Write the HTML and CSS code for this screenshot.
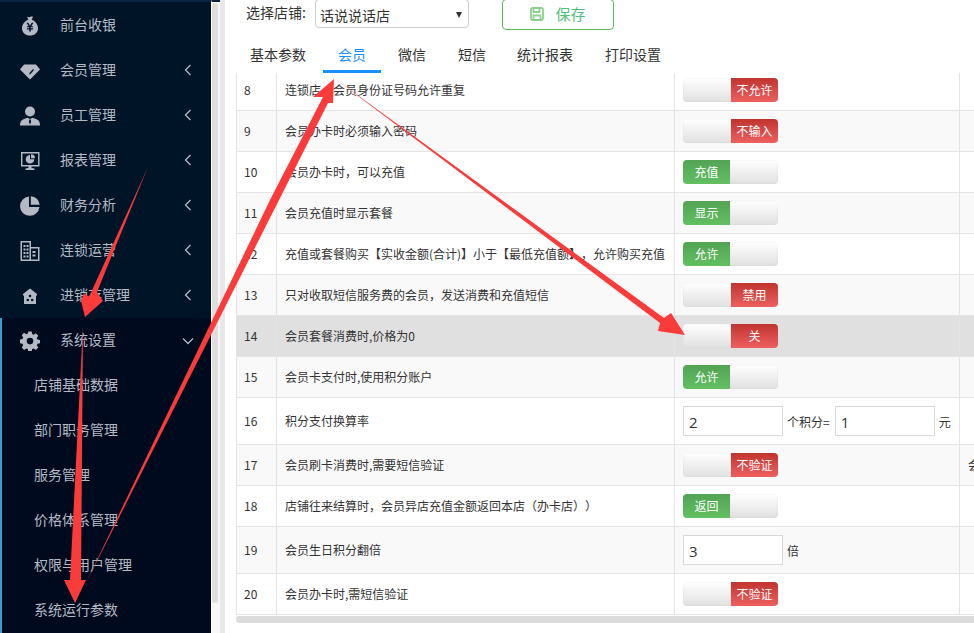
FILE: index.html
```html
<!DOCTYPE html>
<html lang="zh">
<head>
<meta charset="utf-8">
<title>系统运行参数</title>
<link rel="stylesheet" href="styles.css">
</head>
<body>
<div class="app">
  <aside class="sidebar">
    <nav class="nav">
      <a class="nav-item"><svg class="ico" viewBox="0 0 20 20"><path d="M7 .5c1 .8 2 .8 3 .4s2-.4 3-.2l-1.300 3c3.500 1.300 6.300 4.500 6.300 8.500 0 4.600-3.500 7.300-8 7.300s-8-2.700-8-7.300c0-4 2.800-7.200 6.300-8.500z"/><path class="cut" d="M6.500 6.800h1.700l1.800 2.800 1.800-2.800h1.700l-2.200 3.400h1.800v1.100h-2.300v1h2.300v1.100h-2.300v2.100H9.200v-2.100H6.900v-1.100h2.300v-1H6.900v-1.100h1.800z"/></svg><span class="lbl">前台收银</span></a>
      <a class="nav-item"><svg class="ico" viewBox="0 0 20 20"><path d="M4 3.500h12l4 5-10 10-10-10z"/><path class="cut" d="M9.500 12l3.500-4 1 .9-3.500 4-1.500.6z"/></svg><span class="lbl">会员管理</span><svg class="chev" viewBox="0 0 8 12"><path d="M6.500 1 1.500 6l5 5"/></svg></a>
      <a class="nav-item"><svg class="ico" viewBox="0 0 20 20"><circle cx="10" cy="5.500" r="5"/><path d="M0 19.500c0-3.500 1-5.500 4-6.500l3.500-1.200L10 13l2.500-1.200L16 13c3 1 4 3 4 6.500z"/><path class="cut" d="M9.300 13.500h1.400l.4 2.500-1.100 2.500-1.100-2.500z"/></svg><span class="lbl">员工管理</span><svg class="chev" viewBox="0 0 8 12"><path d="M6.500 1 1.500 6l5 5"/></svg></a>
      <a class="nav-item"><svg class="ico" viewBox="0 0 20 20"><path fill-rule="evenodd" d="M1 1h18.500v14.500H11.500V17l3 .6V19h-9v-1.400l3-.6v-1.500H1zm1.400 1.400v11.700h15.700V2.400z"/><path d="M10 4a4.300 4.300 0 1 0 4.300 4.300H10zM11 3.300V7.300h4a4 4 0 0 0-4-4z"/></svg><span class="lbl">报表管理</span><svg class="chev" viewBox="0 0 8 12"><path d="M6.500 1 1.500 6l5 5"/></svg></a>
      <a class="nav-item"><svg class="ico" viewBox="0 0 20 20"><path d="M9 .5v10.400h10.400A9.700 9.700 0 1 1 9 .5z"/><path d="M10.800.2v8.500h8.900A9.500 9.500 0 0 0 10.800.2z"/></svg><span class="lbl">财务分析</span><svg class="chev" viewBox="0 0 8 12"><path d="M6.500 1 1.500 6l5 5"/></svg></a>
      <a class="nav-item"><svg class="ico" viewBox="0 0 20 20"><path fill-rule="evenodd" d="M.5 0h10.500v6h8.500v14H.5zM2 1.500V18.500h7.500V1.500zm9 6V18.500h7V7.500z"/><path d="M3.500 4h2v2h-2zm3 0h2v2h-2zm-3 3.500h2v2h-2zm3 0h2v2h-2zm-3 3.500h2v2h-2zm3 0h2v2h-2zm-3 3.500h2v2h-2zm3 0h2v2h-2zm6-4.500h3v2h-3zm0 3.500h3v2h-3z"/></svg><span class="lbl">连锁运营</span><svg class="chev" viewBox="0 0 8 12"><path d="M6.500 1 1.500 6l5 5"/></svg></a>
      <a class="nav-item"><svg class="ico" viewBox="0 0 20 20"><path d="M10 2.500 17 8v1.500h-1v8.500H4V9.500H3V8z"/><circle class="cut" cx="10" cy="10" r="1.300"/><circle class="cut" cx="7.800" cy="14" r="1.300"/><circle class="cut" cx="12.200" cy="14" r="1.300"/></svg><span class="lbl">进销存管理</span><svg class="chev" viewBox="0 0 8 12"><path d="M6.500 1 1.500 6l5 5"/></svg></a>
    </nav>
    <nav class="nav-open">
      <a class="nav-item"><svg class="ico" viewBox="0 0 20 20"><path fill-rule="evenodd" d="M8.300.5h3.400l.5 2.600 1.500.7 2.200-1.500 2.400 2.400-1.500 2.200.7 1.500 2.500.5v3.400l-2.500.5-.7 1.500 1.500 2.200-2.400 2.400-2.200-1.500-1.500.7-.5 2.600H8.300l-.5-2.600-1.500-.7-2.200 1.500-2.400-2.400 1.500-2.200-.7-1.500-2.500-.5V8.400l2.500-.5.700-1.500-1.500-2.200 2.400-2.400 2.200 1.500 1.500-.7zM10 6.800a3.300 3.300 0 1 0 0 6.600 3.300 3.300 0 0 0 0-6.600z"/></svg><span class="lbl">系统设置</span><svg class="chev-down" viewBox="0 0 12 8"><path d="M1 1.500l5 5 5-5"/></svg></a>
      <a class="nav-sub">店铺基础数据</a>
      <a class="nav-sub">部门职务管理</a>
      <a class="nav-sub">服务管理</a>
      <a class="nav-sub">价格体系管理</a>
      <a class="nav-sub">权限与用户管理</a>
      <a class="nav-sub">系统运行参数</a>
    </nav>
  </aside>
  <div class="side-scroll"><div class="side-thumb"></div></div>
  <main class="main">
    <div class="toolbar">
      <label class="store-label">选择店铺:</label>
      <div class="select">话说说话店<span class="caret"></span></div>
      <button class="save"><svg class="save-ico" viewBox="0 0 14 14"><rect x="1" y="1" width="12" height="12" rx="1.500"/><path d="M3.500 1v4h6V1M3.500 13V8.500h7V13"/></svg><span>保存</span></button>
    </div>
    <div class="tabs">
      <a class="tab">基本参数</a><a class="tab active">会员</a><a class="tab">微信</a><a class="tab">短信</a><a class="tab">统计报表</a><a class="tab">打印设置</a>
    </div>
    <div class="table-wrap">
      <table class="grid">
        <colgroup><col class="c1"><col class="c2"><col class="c3"><col class="c4"></colgroup>
        <tbody>
          <tr><td>8</td><td>连锁店，会员身份证号码允许重复</td><td><span class="sw off"><i></i><b>不允许</b></span></td><td></td></tr>
          <tr><td>9</td><td>会员办卡时必须输入密码</td><td><span class="sw off"><i></i><b>不输入</b></span></td><td></td></tr>
          <tr><td>10</td><td>会员办卡时，可以充值</td><td><span class="sw on"><b>充值</b><i></i></span></td><td></td></tr>
          <tr><td>11</td><td>会员充值时显示套餐</td><td><span class="sw on"><b>显示</b><i></i></span></td><td></td></tr>
          <tr><td>12</td><td>充值或套餐购买【实收金额(合计)】小于【最低充值额】，允许购买充值</td><td><span class="sw on"><b>允许</b><i></i></span></td><td></td></tr>
          <tr><td>13</td><td>只对收取短信服务费的会员，发送消费和充值短信</td><td><span class="sw off"><i></i><b>禁用</b></span></td><td></td></tr>
          <tr class="hover"><td>14</td><td>会员套餐消费时,价格为0</td><td><span class="sw off"><i></i><b>关</b></span></td><td></td></tr>
          <tr><td>15</td><td>会员卡支付时,使用积分账户</td><td><span class="sw on"><b>允许</b><i></i></span></td><td></td></tr>
          <tr class="tall"><td>16</td><td>积分支付换算率</td><td><span class="field">2</span><span class="unit">个积分=</span><span class="field">1</span><span class="unit">元</span></td><td></td></tr>
          <tr><td>17</td><td>会员刷卡消费时,需要短信验证</td><td><span class="sw off"><i></i><b>不验证</b></span></td><td class="extra">会员</td></tr>
          <tr><td>18</td><td>店铺往来结算时，会员异店充值金额返回本店（办卡店））</td><td><span class="sw on"><b>返回</b><i></i></span></td><td></td></tr>
          <tr class="tall"><td>19</td><td>会员生日积分翻倍</td><td><span class="field">3</span><span class="unit">倍</span></td><td></td></tr>
          <tr><td>20</td><td>会员办卡时,需短信验证</td><td><span class="sw off"><i></i><b>不验证</b></span></td><td></td></tr>
        </tbody>
      </table>
    </div>
    <div class="h-scroll"></div>
  </main>
</div>
<svg class="arrows" viewBox="0 0 974 633">
  <polygon points="148,167 97,292 103,301 85,317 81,301 84,293 89,297"/>
  <polygon points="83,325 81,580 86,580 75,603 64,580 70,580"/>
  <polygon points="85,585 270,200 323,97 313,97 334,79 333,103 328,103 279,200"/>
  <polygon points="334,78 664,318 671,313 685,335 658,331 660,323"/>
</svg>
</body>
</html>
```
FILE: styles.css
```css
* { box-sizing: border-box; }
html, body { margin: 0; height: 100%; overflow: hidden; background: #fff; }
body { font-family: "Noto Sans CJK SC", "Liberation Sans", sans-serif; color: #333; text-spacing-trim: space-all; }
.app { display: flex; width: 974px; height: 633px; position: relative; }

.sidebar { width: 211px; height: 633px; flex: none; background: #001428; border-top: 2px solid #0a2240; display: flex; flex-direction: column; }
.nav { height: 316px; padding-top: 1px; }
.nav-open { flex: 1; background: #000a1e; border-left: 2px solid #3c9bd0; }
.nav-item { display: flex; align-items: center; height: 45px; padding-left: 20px; color: #b4bac4; font-size: 14px; }
.nav-open .nav-item { padding-left: 18px; }
.ico { width: 20px; height: 20px; fill: #b4bac4; flex: none; }
.ico .cut { fill: #001428; }
.lbl { margin-left: 20px; flex: 1; padding-bottom: 3px; }
.chev { width: 8px; height: 12px; margin: 0 19px 1px 0; fill: none; stroke: #b4bac4; stroke-width: 1.300; }
.chev-down { width: 12px; height: 8px; margin-right: 17px; fill: none; stroke: #b4bac4; stroke-width: 1.300; }
.nav-sub { display: flex; align-items: center; height: 45px; padding: 0 0 3px 32px; color: #b4bac4; font-size: 14px; }

.side-scroll { width: 9px; height: 633px; flex: none; background: #f7f7f7; border-top: 2px solid #0a2240; border-left: 1px solid #fff; padding-top: 1px; }
.side-thumb { width: 6px; height: 600px; background: #dedede; border-radius: 3px; }

.main { flex: 1; min-width: 0; border-left: 5px solid #e8e8e8; padding-left: 11px; display: flex; flex-direction: column; }
.toolbar { height: 41px; display: flex; align-items: flex-start; }
.store-label { width: 79px; padding-left: 10px; font-size: 14px; line-height: 25px; color: #333; flex: none; white-space: nowrap; }
.select { width: 154px; height: 29px; margin-top: -1px; border: 1px solid #ccc; border-radius: 4px; font-size: 14px; line-height: 30px; padding-left: 4px; position: relative; flex: none; background: #fff; }
.caret { position: absolute; right: 6px; top: 12px; border-left: 3px solid transparent; border-right: 3px solid transparent; border-top: 6px solid #333; }
.save { width: 112px; height: 31px; margin: -1px 0 0 33px; border: 1px solid #5cb85c; border-radius: 4px; background: #fff; color: #4fbf7a; font: 15px/27px "Noto Sans CJK SC", sans-serif; display: flex; align-items: center; justify-content: center; gap: 11px; padding: 0 0 2px; }
.save-ico { width: 14px; height: 14px; fill: none; stroke: #8ccf8c; stroke-width: 1.800; }

.tabs { height: 32px; display: flex; margin-left: -1px; }
.tab { position: relative; font-size: 14px; line-height: 26px; color: #333; padding: 0 15px; }
.tab:first-child { padding-right: 17px; }
.tab:nth-child(2) { color: #1890ff; border-bottom: 3px solid #1890ff; height: 32px; }
.tab:nth-child(3) { padding: 0 17px; }
.tab:nth-child(4) { padding: 0 17px 0 15px; }
.tab:nth-child(5) { padding: 0 16px 0 14px; }
.tab:nth-child(6) { padding: 0 0 0 16px; }

.table-wrap { height: 542px; overflow: hidden; }
.grid { border-collapse: collapse; table-layout: fixed; width: 800px; margin-top: -4px; font-size: 12px; }
.c1 { width: 40px; } .c2 { width: 398px; } .c3 { width: 285px; } .c4 { width: 77px; }
.grid td { height: 41px; border: 1px solid #e4e4e4; padding: 0 8px; white-space: nowrap; overflow: hidden; vertical-align: middle; color: #333; }
.grid td:nth-child(-n+2), .grid td.extra { padding-bottom: 2px; }
.grid td:first-child { padding-left: 7px; }
.grid tr:nth-child(even) td { background: #f9f9f9; }
.grid tr.tall td { height: 47px; }
.grid tr.hover td { background: #e0e0e0; }

.sw { display: inline-flex; width: 95px; height: 24px; border-radius: 4px; overflow: hidden; vertical-align: middle; }
.sw i { flex: 1; background: linear-gradient(#fff, #e0e0e0); box-shadow: inset 0 0 1px #bbb; }
.sw b { width: 47px; font-weight: 400; color: #fff; text-align: center; line-height: 24px; font-size: 12px; }
.sw.off b { background: linear-gradient(#c0342f, #ee6060); }
.sw.on b { background: linear-gradient(#52a354, #63c062); }
.field { display: inline-block; width: 100px; height: 30px; border: 1px solid #d8d8d8; background: #fff; padding-left: 5px; font: 15px/30px "Open Sans", sans-serif; vertical-align: middle; color: #333; }
.unit { display: inline-block; vertical-align: middle; font-size: 12px; margin: 0 5px 0 4px; }

.h-scroll { height: 7px; margin-top: 1px; background: #dcdcdc; border-radius: 3px 0 0 3px; }

.arrows { position: absolute; left: 0; top: 0; width: 974px; height: 633px; pointer-events: none; }
.arrows polygon { fill: #fb3a3a; }
```
